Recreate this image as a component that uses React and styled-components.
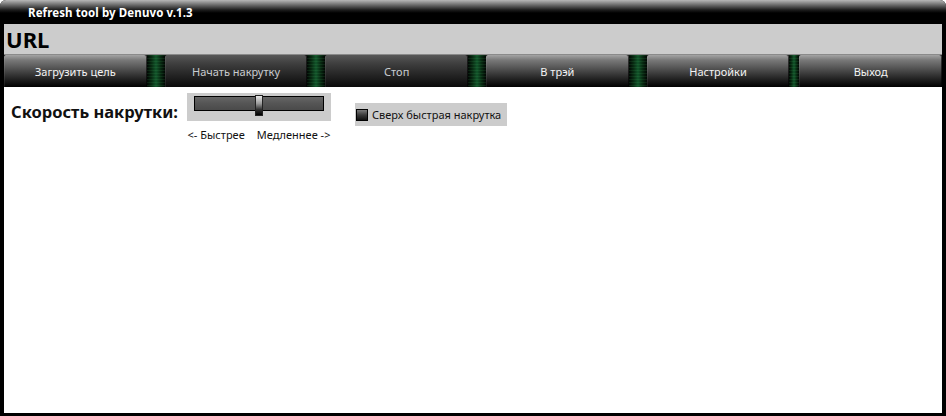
import React from 'react';
import styled, { createGlobalStyle } from 'styled-components';

const GlobalStyle = createGlobalStyle`
    html, body {
        margin: 0;
        padding: 0;
        background: #ffffff;
    }
    body {
        font-family: "Noto Sans", "Open Sans", sans-serif;
    }
`

const buttons = [
    { label: 'Загрузить цель', tone: 'light' },
    { label: 'Начать накрутку', tone: 'dark' },
    { label: 'Стоп', tone: 'dark' },
    { label: 'В трэй', tone: 'light' },
    { label: 'Настройки', tone: 'light' },
    { label: 'Выход', tone: 'light' },
]

export default function App() {
    return (
        <>
            <GlobalStyle />
            <Window>
                <TitleBar>Refresh tool by Denuvo v.1.3</TitleBar>
                <UrlBar>URL</UrlBar>
                <Toolbar>
                    {buttons.map((b, i) => (
                        <React.Fragment key={i}>
                            {i > 0 && <Separator narrow={i === buttons.length - 1} />}
                            <ToolButton tone={b.tone}>{b.label}</ToolButton>
                        </React.Fragment>
                    ))}
                </Toolbar>
                <Content>
                    <SpeedLabel>Скорость накрутки:</SpeedLabel>
                    <SliderGroup>
                        <SliderPanel>
                            <Track>
                                <Thumb />
                            </Track>
                        </SliderPanel>
                        <Caption>
                            <span>&lt;- Быстрее</span>
                            <span>Медленнее -&gt;</span>
                        </Caption>
                    </SliderGroup>
                    <CheckPanel>
                        <CheckBox />
                        Сверх быстрая накрутка
                    </CheckPanel>
                </Content>
            </Window>
        </>
    )
}

const Window = styled.div`
    width: 946px;
    height: 416px;
    box-sizing: border-box;
    background: #000;
    border-radius: 6px 6px 0 0;
    padding: 0 4px 3px 4px;
    display: flex;
    flex-direction: column;
    overflow: hidden;
`

const TitleBar = styled.div`
    height: 24px;
    margin: 0 -4px;
    padding-left: 28px;
    box-sizing: border-box;
    background: linear-gradient(to bottom, #b8b8b8 0px, #6a6a6a 5px, #1c1c1c 10px, #000 13px);
    color: #fff;
    font-weight: 700;
    font-size: 11.5px;
    line-height: 26px;
    letter-spacing: 0.1px;
`

const UrlBar = styled.div`
    height: 30px;
    background: #cccccc;
    border-bottom: 1px solid #8a8a8a;
    padding-left: 2px;
    font-weight: 700;
    font-size: 22px;
    line-height: 31px;
    color: #000;
`

const toneGradient = {
    light: 'linear-gradient(to bottom, #a4a4a4 0%, #7a7a7a 15%, #4e4e4e 45%, #1e1e1e 78%, #000 100%)',
    dark: 'linear-gradient(to bottom, #585858 0%, #404040 25%, #262626 60%, #0a0a0a 100%)',
}

const toneColor = {
    light: '#f4f4f4',
    dark: '#c9ccd0',
}

const Toolbar = styled.div`
    height: 32px;
    display: flex;
    background: #000;
`

const ToolButton = styled.div`
    flex: 1;
    display: flex;
    align-items: center;
    justify-content: center;
    background: ${({ tone }) => toneGradient[tone]};
    color: ${({ tone }) => toneColor[tone]};
    font-size: 11px;
    border-radius: 2px 2px 0 0;
    box-shadow: inset 1px 0 0 rgba(255,255,255,0.08), inset -1px 0 0 rgba(0,0,0,0.6);
`

const Separator = styled.div`
    width: ${({ narrow }) => (narrow ? '10px' : '18px')};
    background:
        repeating-linear-gradient(to bottom, rgba(90, 210, 120, 0.1) 0 1px, transparent 1px 3px),
        linear-gradient(to right, #010603 0%, #082a12 25%, #12542a 50%, #082a12 75%, #010603 100%);
`

const Content = styled.div`
    flex: 1;
    background: #fff;
    display: flex;
    align-items: flex-start;
    padding: 6px 0 0 7px;
`

const SpeedLabel = styled.div`
    width: 176px;
    padding-top: 9px;
    font-weight: 700;
    font-size: 16.5px;
    color: #111;
    line-height: 20px;
    white-space: nowrap;
`

const SliderGroup = styled.div`
    display: flex;
    flex-direction: column;
    align-items: center;
`

const SliderPanel = styled.div`
    width: 144px;
    height: 28px;
    background: #cccccc;
    padding: 3px 0 0 7px;
    box-sizing: border-box;
`

const Track = styled.div`
    position: relative;
    width: 130px;
    height: 15px;
    box-sizing: border-box;
    border: 1px solid #000;
    background: linear-gradient(to bottom, #666 0%, #555 50%, #4a4a4a 100%);
`

const Thumb = styled.div`
    position: absolute;
    left: 60px;
    top: -2px;
    width: 8px;
    height: 21px;
    box-sizing: border-box;
    border: 1px solid #222;
    background: linear-gradient(to bottom, #e8e8e8 0%, #999 40%, #333 70%, #000 100%);
`

const Caption = styled.div`
    display: flex;
    gap: 12px;
    margin-top: 6px;
    font-size: 11px;
    color: #111;
`

const CheckPanel = styled.div`
    margin: 10px 0 0 24px;
    width: 152px;
    height: 23px;
    box-sizing: border-box;
    background: #cccccc;
    display: flex;
    align-items: center;
    gap: 4px;
    padding-left: 1px;
    font-size: 11px;
    color: #111;
`

const CheckBox = styled.div`
    width: 12px;
    height: 12px;
    box-sizing: border-box;
    border: 1px solid #000;
    background: linear-gradient(to bottom, #7a7a7a 0%, #3a3a3a 50%, #111 100%);
`
